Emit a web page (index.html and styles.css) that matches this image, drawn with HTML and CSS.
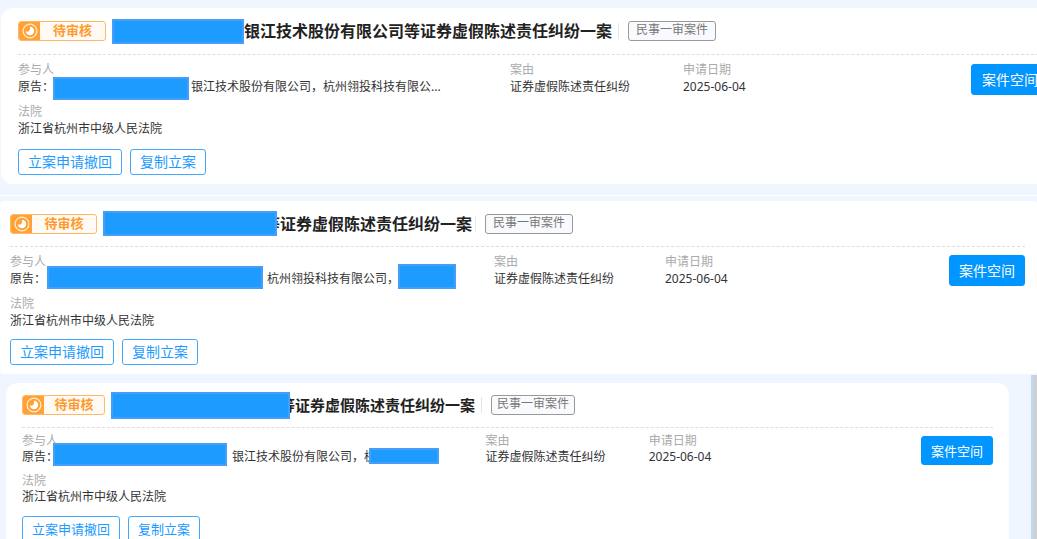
FILE: index.html
```html
<!DOCTYPE html>
<html lang="zh-CN">
<head>
    <meta charset="UTF-8">
    <meta name="viewport" content="width=device-width, initial-scale=1.0">
    <title>我的案件</title>
    <link rel="stylesheet" href="styles.css">
</head>
<body>
    <svg class="sprite" aria-hidden="true">
        <symbol id="icon-pending" viewBox="0 0 16 16">
            <circle cx="8" cy="8" r="6.9" fill="none" stroke="#fff" stroke-opacity=".8" stroke-width="1.3"/>
            <path d="M8 3.8A4.2 4.2 0 1 1 3.8 8c1 .9 2.500 .9 3.400 0 .9-1 1-2.600 .8-4.200z" fill="#fff"/>
        </symbol>
    </svg>

    <section class="panel panel-first">
        <article class="case case-wide">
            <header class="case-header">
                <span class="status"><span class="status-icon"><svg><use href="#icon-pending"/></svg></span><span class="status-text">待审核</span></span>
                <h2><span class="mask"></span>银江技术股份有限公司等证券虚假陈述责任纠纷一案</h2>
                <span class="tag">民事一审案件</span>
            </header>
            <div class="case-info">
                <dl class="parties">
                    <dt>参与人</dt>
                    <dd>原告：<span class="mask"></span>银江技术股份有限公司，杭州翎投科技有限公...</dd>
                </dl>
                <dl>
                    <dt>案由</dt>
                    <dd>证券虚假陈述责任纠纷</dd>
                </dl>
                <dl>
                    <dt>申请日期</dt>
                    <dd>2025-06-04</dd>
                </dl>
                <button type="button" class="btn-primary">案件空间</button>
                <dl class="court">
                    <dt>法院</dt>
                    <dd>浙江省杭州市中级人民法院</dd>
                </dl>
            </div>
            <div class="actions">
                <button type="button">立案申请撤回</button>
                <button type="button">复制立案</button>
            </div>
        </article>
    </section>

    <section class="panel panel-second">
        <article class="case case-full">
            <header class="case-header">
                <span class="status"><span class="status-icon"><svg><use href="#icon-pending"/></svg></span><span class="status-text">待审核</span></span>
                <h2><span class="mask"></span>等证券虚假陈述责任纠纷一案</h2>
                <span class="tag">民事一审案件</span>
            </header>
            <div class="case-info">
                <dl class="parties">
                    <dt>参与人</dt>
                    <dd>原告：<span class="mask"></span>杭州翎投科技有限公司，<span class="mask mask-end"></span></dd>
                </dl>
                <dl>
                    <dt>案由</dt>
                    <dd>证券虚假陈述责任纠纷</dd>
                </dl>
                <dl>
                    <dt>申请日期</dt>
                    <dd>2025-06-04</dd>
                </dl>
                <button type="button" class="btn-primary">案件空间</button>
                <dl class="court">
                    <dt>法院</dt>
                    <dd>浙江省杭州市中级人民法院</dd>
                </dl>
            </div>
            <div class="actions">
                <button type="button">立案申请撤回</button>
                <button type="button">复制立案</button>
            </div>
        </article>
    </section>

    <section class="panel panel-third">
        <article class="case case-small">
            <header class="case-header">
                <span class="status"><span class="status-icon"><svg><use href="#icon-pending"/></svg></span><span class="status-text">待审核</span></span>
                <h2><span class="mask"></span>等证券虚假陈述责任纠纷一案</h2>
                <span class="tag">民事一审案件</span>
            </header>
            <div class="case-info">
                <dl class="parties">
                    <dt>参与人</dt>
                    <dd>原告：<span class="mask"></span>银江技术股份有限公司，杭<span class="mask mask-end"></span></dd>
                </dl>
                <dl>
                    <dt>案由</dt>
                    <dd>证券虚假陈述责任纠纷</dd>
                </dl>
                <dl>
                    <dt>申请日期</dt>
                    <dd>2025-06-04</dd>
                </dl>
                <button type="button" class="btn-primary">案件空间</button>
                <dl class="court">
                    <dt>法院</dt>
                    <dd>浙江省杭州市中级人民法院</dd>
                </dl>
            </div>
            <div class="actions">
                <button type="button">立案申请撤回</button>
                <button type="button">复制立案</button>
            </div>
        </article>
        <div class="scrollbar"></div>
    </section>
</body>
</html>
```
FILE: styles.css
```css
* {
    box-sizing: border-box;
}
body {
    margin: 0;
    height: 100vh;
    overflow: hidden;
    background: #eff6ff;
    color: #333;
    font-family: "Noto Sans", "Noto Sans CJK SC", sans-serif;
    font-size: 12px;
}
h2, dl, dd {
    margin: 0;
}
.sprite {
    display: none;
}

/* panels */
.panel {
    overflow: hidden;
}
.panel-first {
    padding: 8px 0 11px 1px;
}
.panel-second {
    border-top: 1px solid #fff;
    padding-top: 5px;
}
.panel-third {
    display: flex;
    padding-left: 6px;
}
.scrollbar {
    width: 6px;
    margin-top: 1px;
    margin-left: 22px;
    background: #d0d0d0;
    border-left: 2px solid #b9dafd;
}

/* case card */
.case {
    --line: 17px;
    --head: 47px;
    --btn: 14px;
    background: #fff;
    padding-bottom: 9px;
}
.case-wide {
    border-radius: 12px;
    margin-right: -24px;
    padding-left: 17px;
    padding-right: 12px;
}
.case-full {
    --head: 46px;
    border-radius: 4px;
    padding-left: 10px;
    padding-right: 12px;
}
.case-small {
    --line: 16px;
    --head: 45px;
    --btn: 13px;
    flex: 1;
    margin-top: 9px;
    border-radius: 12px;
    padding-left: 16px;
    padding-right: 16px;
}

/* header */
.case-header {
    display: flex;
    align-items: center;
    height: var(--head);
    border-bottom: 1px dashed #ddd;
}
.status {
    display: flex;
    width: 88px;
    height: 20px;
    margin-right: 6px;
    border: 1px solid #ffb868;
    border-radius: 3px;
    background: #fffaf3;
    overflow: hidden;
}
.case-full .status {
    width: 87px;
}
.case-small .status {
    width: 83px;
}
.status-icon {
    display: flex;
    align-items: center;
    justify-content: center;
    width: 21px;
    background: #ffa133;
}
.status-icon svg {
    width: 16px;
    height: 16px;
}
.status-text {
    flex: 1;
    color: #ff9a2e;
    font-size: 13px;
    font-weight: bold;
    line-height: 16px;
    text-align: center;
}
h2 {
    display: flex;
    align-items: center;
    color: #222;
    font-size: 16px;
    font-weight: bold;
    line-height: 24px;
    white-space: nowrap;
}
.case-small h2 {
    font-size: 15px;
}
.tag {
    position: relative;
    height: 20px;
    margin-left: 16px;
    padding: 0 7px;
    border: 1px solid #999;
    border-radius: 3px;
    background: #f8fafd;
    color: #777;
    line-height: 16px;
    white-space: nowrap;
}
.case-full .tag {
    margin-left: 13px;
}
.case-small .tag {
    padding: 0 5px;
}
.tag::before {
    content: "";
    position: absolute;
    left: -11px;
    top: 1px;
    height: 16px;
    border-left: 1px solid #e6e6e6;
}

/* hidden names */
.mask {
    position: relative;
    flex: none;
    width: 132px;
    height: 25px;
    background: #1e9bff;
    border: 2px solid #459ff8;
}
.case-full h2 .mask {
    width: 174px;
    margin-right: -13px;
}
.case-small h2 .mask {
    width: 179px;
    height: 27px;
    margin-right: -10px;
}
dd .mask {
    width: 136px;
    height: 23px;
    margin: -1px 2px 0 -1px;
}
.case-full dd .mask {
    width: 216px;
    margin: -4px 4px 0 1px;
}
.case-small dd .mask {
    width: 174px;
    margin: -6px 5px 0 -5px;
}
.case-full dd .mask-end {
    width: 58px;
    height: 25px;
    margin: -6px 0 0 -1px;
}
.case-small dd .mask-end {
    width: 70px;
    height: 16px;
    margin: -1px 0 0 -7px;
}

/* details */
.case-info {
    display: grid;
    grid-template-columns: 492fr 173fr 288fr auto;
    row-gap: 8px;
    padding-top: 6px;
    line-height: var(--line);
}
.case-full .case-info {
    grid-template-columns: 484fr 171fr 284fr auto;
}
.case-small .case-info {
    grid-template-columns: 463fr 163fr 272fr auto;
    padding-top: 5px;
}
dl {
    min-width: 0;
}
dt {
    color: #aaa;
}
dd {
    display: flex;
    align-items: flex-start;
    height: var(--line);
    white-space: nowrap;
}
.court {
    grid-column: 1 / -1;
}

/* buttons */
button {
    height: 26px;
    padding: 0 9px;
    border: 1px solid #45aaff;
    border-radius: 3px;
    background: #fff;
    color: #1e9bff;
    font-family: inherit;
    font-size: var(--btn);
    line-height: 22px;
    white-space: nowrap;
    cursor: pointer;
}
.btn-primary {
    height: 31px;
    margin: 3px 0 -9px;
    border-color: #0095ff;
    background: #0095ff;
    color: #fff;
}
.case-wide .btn-primary {
    padding: 0 10px;
}
.case-full .btn-primary {
    margin-top: 2px;
}
.case-small .btn-primary {
    height: 29px;
}
.actions {
    display: flex;
    gap: 8px;
    margin-top: 12px;
}
.case-full .actions {
    margin-top: 10px;
}
.case-small .actions {
    margin-top: 11px;
}
```
